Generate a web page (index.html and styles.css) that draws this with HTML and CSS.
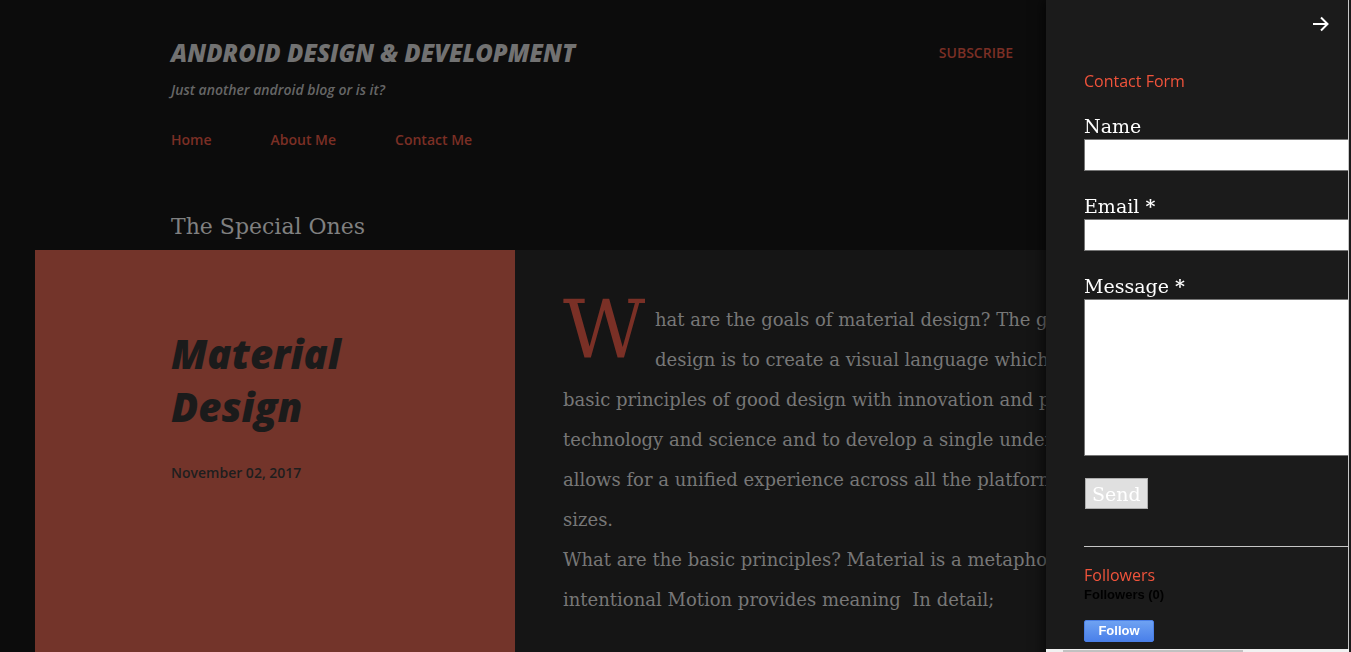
FILE: index.html
```html
<!DOCTYPE html>
<html lang="en">
<head>
<meta charset="utf-8">
<title>Android Design &amp; Development</title>
<link rel="stylesheet" href="styles.css">
</head>
<body>
<div class="page">
  <header class="masthead">
    <div class="title-row">
      <div class="brand">
        <h1 class="blog-title">ANDROID DESIGN &amp; DEVELOPMENT</h1>
        <p class="tagline">Just another android blog or is it?</p>
      </div>
      <a class="subscribe" href="#">SUBSCRIBE</a>
    </div>
    <nav class="nav">
      <a href="#">Home</a>
      <a href="#">About Me</a>
      <a href="#">Contact Me</a>
    </nav>
    <h2 class="section-title">The Special Ones</h2>
  </header>

  <section class="featured">
    <div class="feat-side">
      <h3 class="feat-title">Material Design</h3>
      <div class="feat-date">November 02, 2017</div>
    </div>
    <div class="feat-body">
      <p class="feat-text"><span class="dropcap">W</span>hat are the goals of material design? The goal of material<br>design is to create a visual language which synthesizes the<br>basic principles of good design with innovation and possibility of<br>technology and science and to develop a single underlying system that<br>allows for a unified experience across all the platforms and device<br>sizes.<br>What are the basic principles? Material is a metaphor Bold, graphic,<br>intentional Motion provides meaning&nbsp; In detail;</p>
    </div>
  </section>
</div>

<aside class="drawer">
  <div class="drawer-scroll">
    <div class="drawer-top">
      <svg class="close-arrow" width="17" height="16" viewBox="0 0 17 16" aria-hidden="true">
        <path d="M1 8H15.5M9 1.5L15.5 8L9 14.5" fill="none" stroke="#ffffff" stroke-width="2"/>
      </svg>
    </div>
    <h4 class="widget-title">Contact Form</h4>
    <form class="contact-form">
      <div class="field">
        <label class="field-label">Name</label>
        <input class="field-input" type="text">
      </div>
      <div class="field">
        <label class="field-label">Email <b>*</b></label>
        <input class="field-input" type="text">
      </div>
      <div class="field">
        <label class="field-label">Message <b>*</b></label>
        <textarea class="field-area"></textarea>
      </div>
      <button class="send-btn" type="button">Send</button>
    </form>
    <hr class="divider">
    <h4 class="widget-title followers-title">Followers</h4>
    <div class="followers-count">Followers (0)</div>
    <button class="follow-btn" type="button">Follow</button>
  </div>
  <div class="hscroll"><div class="hscroll-thumb"></div></div>
</aside>
</body>
</html>
```

FILE: styles.css
```css
html, body {
  margin: 0;
  padding: 0;
  overflow: hidden;
  background: #0c0c0c;
}

body {
  width: 1351px;
  height: 652px;
  font-family: "Open Sans", "DejaVu Sans", sans-serif;
}

a { text-decoration: none; }

.page {
  width: 1351px;
}

/* ---------- header ---------- */
.masthead {
  padding: 37px 0 0 171px;
}

.title-row {
  display: flex;
  align-items: flex-start;
  width: 842px;
}

.blog-title {
  margin: 0;
  font-family: "Open Sans", sans-serif;
  font-style: italic;
  font-weight: 800;
  font-size: 24px;
  line-height: 32px;
  color: #727272;
}

.tagline {
  margin: 11px 0 0;
  font-family: "Open Sans", sans-serif;
  font-style: italic;
  font-weight: 600;
  font-size: 14px;
  line-height: 20px;
  color: #666666;
}

.subscribe {
  margin: 6px 0 0 auto;
  font-size: 14px;
  line-height: 20px;
  font-weight: 600;
  color: #7b2f25;
}

.nav {
  display: flex;
  gap: 59px;
  margin-top: 30px;
}

.nav a {
  font-size: 14px;
  line-height: 20px;
  font-weight: 600;
  color: #7b2f25;
}

.section-title {
  margin: 63px 0 9px;
  font-family: "DejaVu Serif", "Liberation Serif", serif;
  font-weight: normal;
  font-size: 22px;
  line-height: 28px;
  color: #808080;
}

/* ---------- featured ---------- */
.featured {
  display: flex;
  margin: 0 35px;
  min-height: 420px;
}

.feat-side {
  flex: 0 0 480px;
  box-sizing: border-box;
  padding: 77px 100px 0 136px;
  background: #73342a;
}

.feat-title {
  margin: 0;
  font-family: "Open Sans", sans-serif;
  font-style: italic;
  font-weight: 800;
  font-size: 40px;
  line-height: 53px;
  color: #1b1b1b;
}

.feat-date {
  margin-top: 30px;
  font-size: 14px;
  line-height: 20px;
  font-weight: 600;
  color: #1e1e1e;
}

.feat-body {
  flex: 1;
  overflow: hidden;
  background: #151515;
  padding: 50px 48px 0;
}

.feat-text {
  margin: 0;
  white-space: nowrap;
  font-family: "DejaVu Serif", "Liberation Serif", serif;
  font-size: 18px;
  line-height: 40px;
  color: #777777;
}

.dropcap {
  float: left;
  width: 80px;
  margin-right: 12px;
  font-size: 80px;
  line-height: 61px;
  color: #7a3026;
}

/* ---------- drawer ---------- */
.drawer {
  position: fixed;
  top: 0;
  right: 0;
  width: 305px;
  height: 664px;
  display: flex;
  flex-direction: column;
  background: #1b1b1b;
  box-shadow: -2px 0 12px rgba(0, 0, 0, 0.7);
}

.drawer-scroll {
  width: 303px;
  height: 649px;
  flex: 0 0 649px;
  box-sizing: border-box;
  overflow: hidden;
  padding-left: 38px;
  border-right: 1px solid #c8c8c8;
}

.drawer-top {
  display: flex;
  justify-content: flex-end;
  height: 16px;
  margin-top: 16px;
  padding-right: 19px;
}

.widget-title {
  margin: 39px 0 0;
  font-family: "Open Sans", sans-serif;
  font-weight: normal;
  font-size: 16px;
  line-height: 20px;
  color: #f0533b;
}

.contact-form {
  margin-top: 22px;
}

.field {
  margin-bottom: 22px;
}

.field-label {
  display: block;
  font-family: "DejaVu Serif", "Liberation Serif", serif;
  font-size: 19px;
  line-height: 26px;
  color: #ffffff;
}

.field-input,
.field-area {
  display: block;
  width: 300px;
  box-sizing: border-box;
  margin: 0;
  border: 1px solid #767676;
  background: #ffffff;
  padding: 0;
}

.field-input {
  height: 32px;
}

.field-area {
  height: 157px;
  resize: none;
}

.send-btn {
  display: block;
  height: 31px;
  margin: 0 0 0 1px;
  padding: 0 6px;
  font-family: "DejaVu Serif", "Liberation Serif", serif;
  font-size: 19px;
  line-height: 24px;
  color: #ffffff;
  background: #e0e0e0;
  border: 1px solid #adadad;
}

.divider {
  width: 300px;
  margin: 37px 0 0;
  border: 0;
  border-top: 1px solid #c6c6c6;
}

.followers-title {
  margin-top: 17px;
  line-height: 22px;
}

.followers-count {
  margin-top: 1px;
  font-family: "Liberation Sans", Arial, sans-serif;
  font-weight: bold;
  font-size: 13px;
  line-height: 15px;
  color: #000000;
}

.follow-btn {
  display: block;
  margin-top: 18px;
  width: 70px;
  height: 22px;
  padding: 0;
  font-family: "Liberation Sans", Arial, sans-serif;
  font-weight: bold;
  font-size: 13px;
  line-height: 20px;
  color: #ffffff;
  border: 1px solid #4a7fe6;
  border-radius: 2px;
  background: linear-gradient(#6ea2f2, #4a80ea);
}

.hscroll {
  height: 15px;
  width: 303px;
  background: #f1f1f1;
  padding-top: 1px;
  box-sizing: border-box;
}

.hscroll-thumb {
  margin-left: 17px;
  width: 180px;
  height: 12px;
  background: #c1c1c1;
}
```
